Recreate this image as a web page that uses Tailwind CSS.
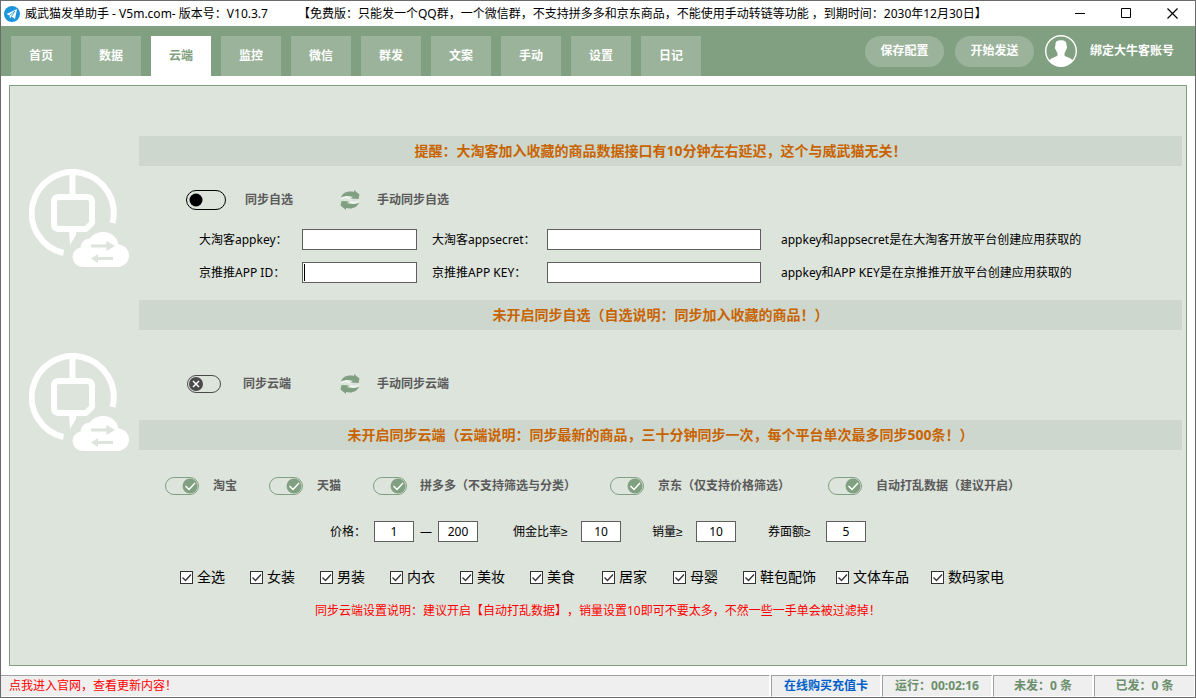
<!DOCTYPE html>
<html lang="zh-CN">
<head>
<meta charset="utf-8">
<title>威武猫发单助手</title>
<script src="https://cdn.jsdelivr.net/npm/@tailwindcss/browser@4"></script>
</head>
<body class="flex min-h-screen flex-col border border-[#6b6b6b] bg-white font-['Noto_Sans','Liberation_Sans','Noto_Sans_CJK_SC',sans-serif] text-[12px] leading-4 text-black [text-spacing-trim:space-all]">

<!-- shared drawings -->
<svg class="hidden" aria-hidden="true">
  <symbol id="cloud-sync" viewBox="0 0 100 98">
    <g fill="none" stroke="#fff" stroke-width="6">
      <path d="M83.500 54A41 41 0 1 0 34.500 84"/>
      <path d="M43.500 4V27"/>
      <path d="M30 28H58Q63 28 63 33V54L57 60H30Q25 60 25 55V33Q25 28 30 28Z" stroke-linejoin="round"/>
    </g>
    <path fill="#fff" d="M40 61H47V66L41 76Z"/>
    <path fill="#fff" d="M54 98C48 98 43.700 93.500 43.700 88C43.700 83 47 79.500 51.500 78.500C52 73 56 70 61 69.500C63.500 65.500 68.500 63 74.500 63C82.500 63 88.500 68.500 89.500 75.500C96 76.500 100 80.500 100 86.500C100 93 95 98 88.500 98Z"/>
    <g fill="#dde4dc"><path d="M62 75.500H77.500V72L86 77L77.500 82V78.500H62Z"/><path d="M84 88V91H69V94L62 89.500L69 85V88Z"/></g>
  </symbol>
  <symbol id="refresh" viewBox="0 0 20 20">
    <path fill="#f2f6f2" d="M0 9.500C1.500 6.500 5 6 8 6.500L12 9.500L5 8Z"/><path fill="#81a081" d="M1 7.500C2.500 2.500 8 .5 14 2V0L19.500 4.500L18.500 9L10.500 8.500L13 7C9 5.500 5 5.500 1 7.500Z"/>
    <g transform="rotate(180 10 10)"><path fill="#f2f6f2" d="M0 9.500C1.500 6.500 5 6 8 6.500L12 9.500L5 8Z"/><path fill="#81a081" d="M1 7.500C2.500 2.500 8 .5 14 2V0L19.500 4.500L18.500 9L10.500 8.500L13 7C9 5.500 5 5.500 1 7.500Z"/></g>
  </symbol>
  <symbol id="knob-on" viewBox="0 0 34 18"><circle cx="25" cy="9" r="7.500" fill="#81a081"/><path d="M20.500 9L24 12.500L30 6" fill="none" stroke="#fff" stroke-width="1.500"/></symbol>
  <symbol id="tick" viewBox="0 0 13 13"><path d="M2.500 6.500L5.500 9.500L11 3.500" fill="none" stroke="#333" stroke-width="1.300"/></symbol>
</svg>

<header class="flex h-[25px] items-center pl-[3px]">
  <svg class="size-4" viewBox="0 0 16 16"><circle cx="8" cy="8" r="8" fill="#1c94dc"/><path fill="#fff" d="M2.500 8L13 3L11 13L7.500 10.500L6 12.500L5.500 9.500Z"/><path d="M5.500 9.500L11 5L7.500 10.500" fill="none" stroke="#1c94dc" stroke-width=".8"/></svg>
  <h1 class="ml-[5px] whitespace-pre">威武猫发单助手 - V5m.com- 版本号：V10.3.7</h1>
  <p class="ml-[30px] whitespace-nowrap">【免费版：只能发一个QQ群，一个微信群，不支持拼多多和京东商品，不能使用手动转链等功能 ，到期时间：2030年12月30日】</p>
  <div class="ml-auto flex">
    <button aria-label="最小化" class="flex h-[25px] w-[46px] items-center justify-center"><svg class="size-[11px]" viewBox="0 0 11 11"><path d="M0 5.500H10" stroke="#000"/></svg></button>
    <button aria-label="最大化" class="flex h-[25px] w-[46px] items-center justify-center"><svg class="size-[11px]" viewBox="0 0 11 11"><path d="M.5 .5H9.500V9.500H.5Z" fill="none" stroke="#000"/></svg></button>
    <button aria-label="关闭" class="flex h-[25px] w-[46px] items-center justify-center"><svg class="size-[11px]" viewBox="0 0 11 11"><path d="M.5 .5L10.500 10.500M10.500 .5L.5 10.500" stroke="#000" stroke-width="1.200"/></svg></button>
  </div>
</header>

<div class="flex h-[50px] justify-between bg-[#81a081] pr-[21px] pl-[10px] font-bold text-white">
  <nav class="flex items-end gap-[10px]">
    <button class="h-10 w-[60px] bg-[#9ab39a]">首页</button>
    <button class="h-10 w-[60px] bg-[#9ab39a]">数据</button>
    <button class="h-10 w-[60px] bg-white text-[#81a081]" aria-current="page">云端</button>
    <button class="h-10 w-[60px] bg-[#9ab39a]">监控</button>
    <button class="h-10 w-[60px] bg-[#9ab39a]">微信</button>
    <button class="h-10 w-[60px] bg-[#9ab39a]">群发</button>
    <button class="h-10 w-[60px] bg-[#9ab39a]">文案</button>
    <button class="h-10 w-[60px] bg-[#9ab39a]">手动</button>
    <button class="h-10 w-[60px] bg-[#9ab39a]">设置</button>
    <button class="h-10 w-[60px] bg-[#9ab39a]">日记</button>
  </nav>
  <div class="flex items-center">
    <button class="h-[31px] w-[79px] rounded-full bg-[#9ab39a]">保存配置</button>
    <button class="ml-[11px] h-[31px] w-[79px] rounded-full bg-[#9ab39a]">开始发送</button>
    <button class="ml-[11px] flex items-center gap-[13px]">
      <svg class="size-8" viewBox="0 0 32 32"><circle cx="16" cy="16" r="15.300" fill="none" stroke="#fff" stroke-width="1.400"/><path fill="#fff" d="M10.500 9C10.500 6.500 12 5.500 14 5.500C15 5 17 5 18.500 5.500C21 6 21.500 8 21.500 10C21.500 11 22 11 22 12.500C22 14 21 14 21 15C20.500 17 19.500 17.500 19.500 18.500V20.500C20.500 22 26 22.500 27.800 25.500A15 15 0 0 1 4.200 25.500C6 22.500 11.500 22 12.500 20.500V18.500C12.500 17.500 11.500 17 11 15C10.500 14.500 10 14 10 12.500C10 11.500 10.500 11 10.500 9Z"/></svg>
      绑定大牛客账号
    </button>
  </div>
</div>

<main class="mx-2 my-[9px] flex-1 border border-[#81a081] bg-[#dde4dc] pt-[50px] pr-1">
  <section class="flex">
    <div class="w-[129px] shrink-0 pt-[33px] pl-[19px]"><svg class="h-[98px] w-[100px]"><use href="#cloud-sync"/></svg></div>
    <div class="min-w-0 flex-1">
      <p class="bg-[#ced7ce] text-center text-[14px] leading-[30px] font-bold text-[#c86400]">提醒：大淘客加入收藏的商品数据接口有10分钟左右延迟，这个与威武猫无关！</p>
      <div class="mt-5 flex h-7 items-center pl-[47px] font-bold text-[#5a5a5a]">
        <label class="flex w-[154px] items-center gap-[19px]">
          <span class="grid">
            <input type="checkbox" class="col-start-1 row-start-1 h-5 w-10 appearance-none rounded-full border border-black">
            <svg class="pointer-events-none col-start-1 row-start-1 h-5 w-10" viewBox="0 0 40 20"><circle cx="10" cy="10" r="6.500"/></svg>
          </span>同步自选
        </label>
        <button class="flex items-center gap-[17px]"><svg class="size-5"><use href="#refresh"/></svg>手动同步自选</button>
      </div>
      <div class="mt-[15px] grid grid-cols-[103px_130px_115px_234px_auto] items-center gap-y-3 pl-[60px]">
        <label for="dtk-key">大淘客appkey：</label>
        <input id="dtk-key" class="h-[21px] w-[115px] border border-[#5f5f5f] bg-white px-1">
        <label for="dtk-secret">大淘客appsecret：</label>
        <input id="dtk-secret" class="h-[21px] w-[214px] border border-[#5f5f5f] bg-white px-1">
        <p>appkey和appsecret是在大淘客开放平台创建应用获取的</p>
        <label for="jtt-id">京推推APP ID：</label>
        <div class="relative flex">
          <input id="jtt-id" class="h-[21px] w-[115px] border border-[#5f5f5f] bg-white px-1">
          <span class="absolute top-[2px] left-[2px] h-[17px] w-px bg-black"></span>
        </div>
        <label for="jtt-key">京推推APP KEY：</label>
        <input id="jtt-key" class="h-[21px] w-[214px] border border-[#5f5f5f] bg-white px-1">
        <p>appkey和APP KEY是在京推推开放平台创建应用获取的</p>
      </div>
      <p class="mt-[17px] bg-[#ced7ce] text-center text-[14px] leading-[30px] font-bold text-[#c86400]">未开启同步自选（自选说明：同步加入收藏的商品！）</p>
    </div>
  </section>

  <section class="flex">
    <div class="w-[129px] shrink-0 pt-[23px] pl-[19px]"><svg class="h-[98px] w-[100px]"><use href="#cloud-sync"/></svg></div>
    <div class="min-w-0 flex-1">
      <div class="mt-10 flex h-7 items-center pl-12 font-bold text-[#5a5a5a]">
        <label class="flex w-[153px] items-center gap-[22px]">
          <span class="grid">
            <input type="checkbox" class="col-start-1 row-start-1 h-[18px] w-[34px] appearance-none rounded-full border border-[#4a4a4a]">
            <svg class="pointer-events-none col-start-1 row-start-1 h-[18px] w-[34px]" viewBox="0 0 34 18"><circle cx="9" cy="9" r="7" fill="#4a4a4a"/><path d="M6 6L12 12M12 6L6 12" stroke="#fff" stroke-width="1.500"/></svg>
          </span>同步云端
        </label>
        <button class="flex items-center gap-[17px]"><svg class="size-5"><use href="#refresh"/></svg>手动同步云端</button>
      </div>
      <p class="mt-[22px] bg-[#ced7ce] text-center text-[14px] leading-[30px] font-bold text-[#c86400]">未开启同步云端（云端说明：同步最新的商品，三十分钟同步一次，每个平台单次最多同步500条！）</p>

      <div class="mt-[22px] flex h-7 items-center pl-[26px] font-bold whitespace-nowrap text-[#5a5a5a]">
        <label class="flex items-center gap-[14px]"><span class="grid"><input type="checkbox" checked class="col-start-1 row-start-1 h-[18px] w-[34px] appearance-none rounded-full border border-[#81a081]"><svg class="pointer-events-none col-start-1 row-start-1 h-[18px] w-[34px]"><use href="#knob-on"/></svg></span>淘宝</label>
        <label class="ml-8 flex items-center gap-[14px]"><span class="grid"><input type="checkbox" checked class="col-start-1 row-start-1 h-[18px] w-[34px] appearance-none rounded-full border border-[#81a081]"><svg class="pointer-events-none col-start-1 row-start-1 h-[18px] w-[34px]"><use href="#knob-on"/></svg></span>天猫</label>
        <label class="ml-8 flex items-center gap-[13px]"><span class="grid"><input type="checkbox" checked class="col-start-1 row-start-1 h-[18px] w-[34px] appearance-none rounded-full border border-[#81a081]"><svg class="pointer-events-none col-start-1 row-start-1 h-[18px] w-[34px]"><use href="#knob-on"/></svg></span>拼多多（不支持筛选与分类）</label>
        <label class="ml-[34px] flex items-center gap-[14px]"><span class="grid"><input type="checkbox" checked class="col-start-1 row-start-1 h-[18px] w-[34px] appearance-none rounded-full border border-[#81a081]"><svg class="pointer-events-none col-start-1 row-start-1 h-[18px] w-[34px]"><use href="#knob-on"/></svg></span>京东（仅支持价格筛选）</label>
        <label class="ml-[38px] flex items-center gap-[14px]"><span class="grid"><input type="checkbox" checked class="col-start-1 row-start-1 h-[18px] w-[34px] appearance-none rounded-full border border-[#81a081]"><svg class="pointer-events-none col-start-1 row-start-1 h-[18px] w-[34px]"><use href="#knob-on"/></svg></span>自动打乱数据（建议开启）</label>
      </div>

      <div class="mt-[21px] flex items-center pl-[191px] whitespace-nowrap">
        <label for="price-min" class="w-11">价格：</label>
        <input id="price-min" value="1" class="h-[21px] w-10 border border-[#5f5f5f] bg-white text-center">
        <span class="w-6 text-center">—</span>
        <input id="price-max" aria-label="最高价格" value="200" class="h-[21px] w-10 border border-[#5f5f5f] bg-white text-center">
        <label for="rate" class="ml-[35px] w-[68px]">佣金比率≥</label>
        <input id="rate" value="10" class="h-[21px] w-10 border border-[#5f5f5f] bg-white text-center">
        <label for="sales" class="ml-[31px] w-11">销量≥</label>
        <input id="sales" value="10" class="h-[21px] w-10 border border-[#5f5f5f] bg-white text-center">
        <label for="coupon" class="ml-8 w-[58px]">券面额≥</label>
        <input id="coupon" value="5" class="h-[21px] w-10 border border-[#5f5f5f] bg-white text-center">
      </div>

      <div class="mt-[21px] flex h-7 items-center pl-[41px] text-[14px] whitespace-nowrap">
        <label class="flex items-center gap-1"><span class="grid"><input type="checkbox" checked class="col-start-1 row-start-1 size-[13px] appearance-none border border-[#333] bg-white"><svg class="pointer-events-none col-start-1 row-start-1 size-[13px]"><use href="#tick"/></svg></span>全选</label>
        <label class="ml-[25px] flex items-center gap-1"><span class="grid"><input type="checkbox" checked class="col-start-1 row-start-1 size-[13px] appearance-none border border-[#333] bg-white"><svg class="pointer-events-none col-start-1 row-start-1 size-[13px]"><use href="#tick"/></svg></span>女装</label>
        <label class="ml-[25px] flex items-center gap-1"><span class="grid"><input type="checkbox" checked class="col-start-1 row-start-1 size-[13px] appearance-none border border-[#333] bg-white"><svg class="pointer-events-none col-start-1 row-start-1 size-[13px]"><use href="#tick"/></svg></span>男装</label>
        <label class="ml-[25px] flex items-center gap-1"><span class="grid"><input type="checkbox" checked class="col-start-1 row-start-1 size-[13px] appearance-none border border-[#333] bg-white"><svg class="pointer-events-none col-start-1 row-start-1 size-[13px]"><use href="#tick"/></svg></span>内衣</label>
        <label class="ml-[25px] flex items-center gap-1"><span class="grid"><input type="checkbox" checked class="col-start-1 row-start-1 size-[13px] appearance-none border border-[#333] bg-white"><svg class="pointer-events-none col-start-1 row-start-1 size-[13px]"><use href="#tick"/></svg></span>美妆</label>
        <label class="ml-[25px] flex items-center gap-1"><span class="grid"><input type="checkbox" checked class="col-start-1 row-start-1 size-[13px] appearance-none border border-[#333] bg-white"><svg class="pointer-events-none col-start-1 row-start-1 size-[13px]"><use href="#tick"/></svg></span>美食</label>
        <label class="ml-[27px] flex items-center gap-1"><span class="grid"><input type="checkbox" checked class="col-start-1 row-start-1 size-[13px] appearance-none border border-[#333] bg-white"><svg class="pointer-events-none col-start-1 row-start-1 size-[13px]"><use href="#tick"/></svg></span>居家</label>
        <label class="ml-[26px] flex items-center gap-1"><span class="grid"><input type="checkbox" checked class="col-start-1 row-start-1 size-[13px] appearance-none border border-[#333] bg-white"><svg class="pointer-events-none col-start-1 row-start-1 size-[13px]"><use href="#tick"/></svg></span>母婴</label>
        <label class="ml-[25px] flex items-center gap-1"><span class="grid"><input type="checkbox" checked class="col-start-1 row-start-1 size-[13px] appearance-none border border-[#333] bg-white"><svg class="pointer-events-none col-start-1 row-start-1 size-[13px]"><use href="#tick"/></svg></span>鞋包配饰</label>
        <label class="ml-5 flex items-center gap-1"><span class="grid"><input type="checkbox" checked class="col-start-1 row-start-1 size-[13px] appearance-none border border-[#333] bg-white"><svg class="pointer-events-none col-start-1 row-start-1 size-[13px]"><use href="#tick"/></svg></span>文体车品</label>
        <label class="ml-[22px] flex items-center gap-1"><span class="grid"><input type="checkbox" checked class="col-start-1 row-start-1 size-[13px] appearance-none border border-[#333] bg-white"><svg class="pointer-events-none col-start-1 row-start-1 size-[13px]"><use href="#tick"/></svg></span>数码家电</label>
      </div>
      <p class="mt-[10px] pl-[176px] leading-5 text-[#ff0000]">同步云端设置说明：建议开启【自动打乱数据】，销量设置10即可不要太多，不然一些一手单会被过滤掉！</p>
    </div>
  </section>
</main>

<footer class="flex h-[22px] gap-px font-bold">
  <a href="#" class="flex flex-1 items-center border-t border-r border-b border-t-[#a0a0a0] border-r-white border-b-white bg-[#efefef] pl-2 font-normal text-[#ff0000]">点我进入官网，查看更新内容！</a>
  <a href="#" class="flex w-[110px] items-center justify-center border border-t-[#a0a0a0] border-r-white border-b-white border-l-[#a0a0a0] bg-[#efefef] text-[#0060c8]">在线购买充值卡</a>
  <p class="flex w-[110px] items-center justify-center border border-t-[#a0a0a0] border-r-white border-b-white border-l-[#a0a0a0] bg-[#efefef] text-[#6b8e6b]">运行：00:02:16</p>
  <p class="flex w-[100px] items-center justify-center border border-t-[#a0a0a0] border-r-white border-b-white border-l-[#a0a0a0] bg-[#efefef] text-[#6b8e6b]">未发：0 条</p>
  <p class="flex w-[101px] items-center justify-center border border-t-[#a0a0a0] border-r-white border-b-white border-l-[#a0a0a0] bg-[#efefef] text-[#6b8e6b]">已发：0 条</p>
</footer>
</body>
</html>
